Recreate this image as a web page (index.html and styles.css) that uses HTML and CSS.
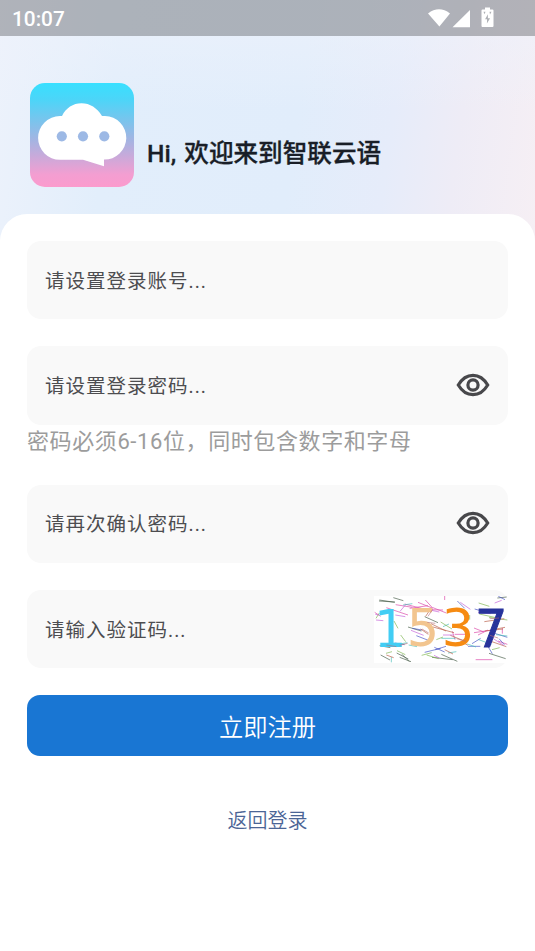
FILE: index.html
```html
<!DOCTYPE html>
<html lang="zh-CN">
<head>
<meta charset="utf-8">
<title>注册</title>
<link rel="stylesheet" href="styles.css">
</head>
<body>
<header class="hero">
  <div class="status">
    <span class="time">10:07</span>
    <svg class="status-icons" viewBox="0 0 68 24" aria-hidden="true">
      <path fill="#fff" d="M0 6.500Q11 -1.800 22 6.500L11.400 19.500ZM24.500 20.200 42 3V20.200ZM54.500 2.500H57V.500H62V2.500H64.500Q65.500 2.500 65.500 3.500V19Q65.500 20 64.500 20H54.500Q53.500 20 53.500 19V3.500Q53.500 2.500 54.500 2.500Z"/>
      <path fill="#aeb0b5" d="M59.900 7.300 57.100 12.300H59.100L58.900 16.500 62.100 11.200H59.900ZM55.500 4.700h2l-1 2.500zM61.500 4.700h2l-1.500 2.800z"/>
    </svg>
  </div>
  <div class="brand">
    <svg class="logo" viewBox="0 0 104 104" aria-hidden="true">
      <defs><linearGradient id="sky" x1="0" y1="0" x2="0" y2="1"><stop offset="0" stop-color="#38e0ff"/><stop offset=".16" stop-color="#4cd5f8"/><stop offset=".55" stop-color="#a4b4e2"/><stop offset=".88" stop-color="#f39ed1"/><stop offset="1" stop-color="#fb9bcd"/></linearGradient></defs>
      <rect width="104" height="104" rx="15" fill="url(#sky)"/>
      <path fill="#fff" d="M32 33C36 25 43 20.300 51.500 20.300S67 25 72 33H75A21.500 21.500 0 0 1 74 76.600V83.200L53 76.800H30A21.900 21.900 0 0 1 30 33Z"/>
      <g fill="#9db9e5"><circle cx="31.800" cy="53.300" r="5.100"/><circle cx="53" cy="53.300" r="5.100"/><circle cx="74.300" cy="53.300" r="5.100"/></g>
    </svg>
    <h1>Hi, 欢迎来到智联云语</h1>
  </div>
</header>
<main class="card">
  <div class="field"><span>请设置登录账号...</span></div>
  <div class="field">
    <span>请设置登录密码...</span>
    <svg class="eye" viewBox="0 0 34 24"><path d="M2.300 12Q8 2.300 17 2.300T31.700 12Q26 21.700 17 21.700T2.300 12Z"/><circle cx="17" cy="12" r="5.100"/></svg>
  </div>
  <p class="hint">密码必须6-16位，同时包含数字和字母</p>
  <div class="field">
    <span>请再次确认密码...</span>
    <svg class="eye" viewBox="0 0 34 24"><path d="M2.300 12Q8 2.300 17 2.300T31.700 12Q26 21.700 17 21.700T2.300 12Z"/><circle cx="17" cy="12" r="5.100"/></svg>
  </div>
  <div class="field">
    <span>请输入验证码...</span>
    <svg class="captcha" viewBox="28 33 402 201">
      <rect x="28" y="33" width="402" height="201" fill="#fff"/>
      <g class="noise">
        <path stroke="#d8309f" d="M65 68 130 90M93 59l50 8M120 57l65 17M135 70l55-8M160 52l45 18M182 45l22 24M150 73l85 2M205 68l40 16M240 31v14M263 139l8 25M328 143l55-8M340 150l30-15M328 129l30 12M30 82l18 12M333 224h50M413 129v17M270 148h35M400 168l28 10"/>
        <path stroke="#334c35" d="M44 45l46 7M43 48l48 3M86 38l30 9M45 182l32 6M48 210l28 15M96 204l35 18M105 217l34 13M112 208l22 22M130 126l40 12M180 95l40 18M202 217l62 7M230 208l48 21M373 205l50 16M398 39l28-3"/>
        <path stroke="#3240c0" d="M90 174l30 5M155 152l36 14M180 202l48-12M209 187l31 14M212 194l32-10M278 48l22 22M310 184h37M322 176l26-16M401 34l20 10M330 72l35 10M390 145l38 12M403 161l16 18M367 180l16 26M143 130l29 5"/>
        <path stroke="#35b8b0" d="M88 180l40-7M132 180l25 5M230 160h43M235 125l18-8M250 204l25-4M308 177l26 9M340 163l40 15M394 149l34 4M80 216v16M115 60l28-4"/>
        <path stroke="#6fae3c" d="M34 100l10-16M64 205l18-5M97 197l25 12M108 150l15 20M88 108l12 22M215 164l20-8M228 111l34 21M315 90v14M342 54l32 10M382 194l23-6M373 97l55 8M171 211l30-8M344 87l50 11M186 210l36 11"/>
        <path stroke="#b04a30" d="M183 94l14-21M199 116l45 22M205 126l63 17M168 132l23 16M257 151l45 18M288 169l22 12M359 110l60-9M360 138l55-6M384 134l37-7M376 168l49 17M240 194l25 13M65 210l22 8"/>
        <path stroke="#be4fd4" d="M92 90l30 5M106 79l17-20M139 136l38 15M182 72l42 9M235 150h31M287 52l30 21M340 82l38 4M386 161l31 20M390 54l21-8M32 88l10 2M34 105l22 2M208 211l16 8"/>
      </g>
      <g class="digits"><text x="28" y="186" fill="#42cdf4">1</text><text x="126" y="182" fill="#f2c58f">5</text><text x="231" y="184" fill="#f68b12">3</text><text x="331" y="185" fill="#27339b" stroke="#27339b" stroke-width="3">7</text></g>
      <path class="noise" stroke="#b46c76" d="M190 94l14-21M172 132l20 12M188 112l24 3M105 181l24-6M65 180l30 5M276 161l28 8M375 101l28-2M376 151l24 8"/>
    </svg>
  </div>
  <button class="submit">立即注册</button>
  <a class="back">返回登录</a>
</main>
</body>
</html>
```

FILE: styles.css
```css
* { box-sizing: border-box; }
body {
  margin: 0;
  min-height: 951px;
  background: #fff;
  font-family: Roboto, "Noto Sans CJK SC", sans-serif;
}
.hero {
  height: 240px;
  background:
    linear-gradient(180deg, rgba(238,242,251,.5) 36px, transparent 110px),
    linear-gradient(98deg, #edf2fb 0%, #e2eefb 22%, #e1edfb 55%, #e6ecfa 72%, #eeecf6 84%, #f6eff4 100%);
}
.status {
  height: 36px;
  padding: 0 39px 0 12px;
  display: flex;
  align-items: center;
  justify-content: space-between;
  background: rgba(0,0,0,.26);
}
.time { color: #fff; font-size: 20.8px; font-weight: 500; line-height: 36px; padding-top: 1px; }
.status-icons { width: 68px; height: 24px; margin-top: 2px; }
.brand {
  display: flex;
  align-items: flex-end;
  gap: 13px;
  padding: 47px 30px 0;
}
.logo { width: 104px; height: 104px; }
h1 {
  margin: 0 0 15px;
  color: #191e27;
  font-size: 24.6px;
  font-weight: 500;
  line-height: 36px;
  word-spacing: 2px;
  -webkit-text-stroke: .3px #191e27;
  white-space: nowrap;
}
.card {
  margin-top: -26px;
  padding: 27px 27px 0;
  display: flex;
  flex-direction: column;
  background: #fff;
  border-radius: 27px 27px 0 0;
}
.field {
  height: 78.300px;
  margin-bottom: 27px;
  padding-left: 18px;
  display: flex;
  align-items: center;
  justify-content: space-between;
  background: #f9f9f9;
  border-radius: 14px;
  color: #4d4d50;
  font-size: 19.5px;
  letter-spacing: 1px;
}
.field span { padding-bottom: 2px; }
.eye { width: 34px; height: 24px; margin: 0 18px 1px 0; fill: none; stroke: #48484b; stroke-width: 3.200; }
.hint {
  height: 33px;
  margin: -27px 0 27px;
  color: #9c9c9c;
  font-size: 22px;
  line-height: 33px;
  letter-spacing: .600px;
  white-space: nowrap;
}
.captcha { width: 134px; height: 67px; }
.digits { font: 400 153px "DejaVu Sans", sans-serif; letter-spacing: 0; }
.noise { fill: none; stroke-width: 2; opacity: .9; }
.submit {
  height: 61px;
  border: 0;
  border-radius: 13px;
  background: #1976d3;
  color: #fff;
  font: 350 24.3px/61px Roboto, "Noto Sans CJK SC", sans-serif;
  padding: 2px 0 0;
}
.back {
  margin-top: 50px;
  align-self: center;
  color: #4b6596;
  font-size: 20px;
  font-weight: 350;
  line-height: 30px;
}
```
